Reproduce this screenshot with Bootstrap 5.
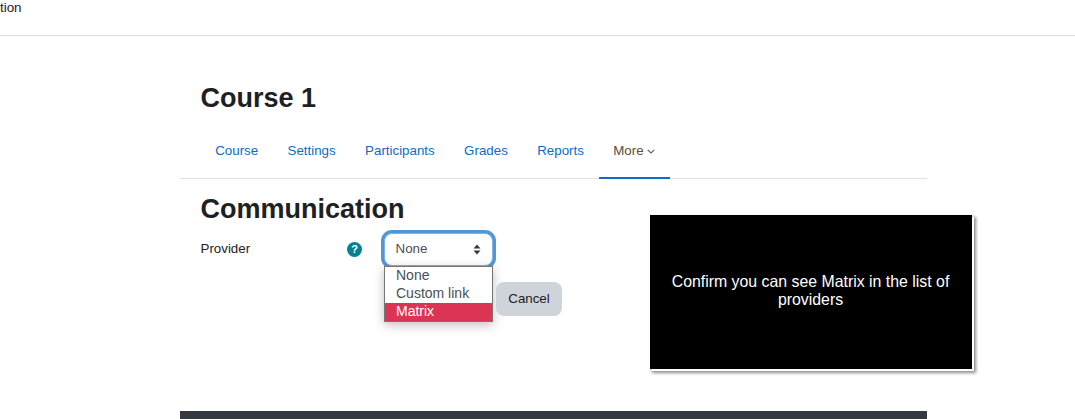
<!DOCTYPE html>
<html lang="en"><head><meta charset="utf-8"><title>Course 1</title>
<link href="https://cdn.jsdelivr.net/npm/bootstrap@5.3.0/dist/css/bootstrap.min.css" rel="stylesheet">
<style>
html,body{height:419px;overflow:hidden}
body{font-family:"Liberation Sans",Arial,sans-serif;font-size:13.33px;color:#1d2125;background:#fff;position:relative}
.top-strip{height:36px;border-bottom:1px solid #dee2e6;line-height:15px}
.page-wrap{width:747px;margin-left:180px}
.course-head{padding:45px 21px 0;height:107px}
.course-head h2,.comm-title{font-size:27px;font-weight:700;line-height:34px;margin:0;color:#1d2125}
.course-head h2{margin-left:-.5px}
.course-tabs{height:37px;border-bottom:1px solid #dee2e6;padding-left:20.5px;flex-wrap:nowrap}
.course-tabs .nav-link{padding:1px 14.7px 0;height:37px;line-height:16px;font-size:13.33px;color:#0f6cbf;border-bottom:2px solid transparent;margin-bottom:-1px}
.course-tabs .nav-link.act{color:#5e4b3f;border-bottom-color:#0f6cbf}
.tabs-row{margin-top:-1px}
.comm-title{padding:0 20.5px;margin-top:13px}
.form-line{padding-left:20.5px;margin-top:5px;height:36px}
.prov-label{width:146.5px;line-height:16px}
.help-dot{width:15px;height:15px;border-radius:50%;background:#008196;color:#fff;font-size:11px;font-weight:700;line-height:15px;text-align:center;margin-right:22px}
.select-fake{width:109px;height:33px;border:1px solid #7fb2e3;border-radius:8px;box-shadow:0 0 0 3px #4e97d8;padding:0 11.5px 0 10.5px;background:#fff;color:#495057;line-height:16px}
.list-pop{position:absolute;left:384px;top:266px;width:109px;height:56px;background:#fff;border:1px solid #767676;box-shadow:0 3px 10px rgba(0,0,0,.25);font-size:14px;line-height:16px;color:#495057}
.list-pop div{padding:0 11px;height:18px}
.list-pop .on{background:#dc3553;color:#fff}
.btn-cancel{position:absolute;left:496px;top:282px;width:66px;height:34px;background:#ced4da;border:0;border-radius:8px;color:#1d2125;font-size:13.33px;padding:0}
.tour-box{position:absolute;left:650px;top:215px;width:322px;height:154px;background:#000;color:#fff;font-size:15.87px;line-height:18px;text-align:center;padding:0 15px 2px 14px;box-shadow:2px 2px 0 #fff,3px 3px 3px 1px rgba(0,0,0,.45)}
.foot-band{position:absolute;left:180px;top:411px;width:747px;height:8px;background:#343a40}
</style></head>
<body>
<div class="top-strip">tion</div>
<div class="page-wrap">
  <div class="course-head"><h2>Course 1</h2></div>
  <ul class="nav course-tabs tabs-row">
    <li class="nav-item"><a class="nav-link" href="#">Course</a></li>
    <li class="nav-item"><a class="nav-link" href="#">Settings</a></li>
    <li class="nav-item"><a class="nav-link" href="#">Participants</a></li>
    <li class="nav-item"><a class="nav-link" href="#">Grades</a></li>
    <li class="nav-item"><a class="nav-link" href="#">Reports</a></li>
    <li class="nav-item"><a class="nav-link act" href="#">More <svg width="8" height="5" viewBox="0 0 8 5" fill="none" stroke="#5e5e5e" stroke-width="1.1"><path d="M.7.8 4 4 7.3.8"/></svg></a></li>
  </ul>
  <h2 class="comm-title">Communication</h2>
  <div class="d-flex align-items-center form-line">
    <div class="prov-label">Provider</div>
    <div class="help-dot">?</div>
    <div class="select-fake d-flex align-items-center justify-content-between">
      <span>None</span>
      <svg width="8" height="11" viewBox="0 0 8 11" fill="#343a40"><path d="M4 .5 7.5 4.5H.5zM4 10.5.5 6.5h7z"/></svg>
    </div>
  </div>
</div>
<div class="list-pop"><div>None</div><div>Custom link</div><div class="on">Matrix</div></div>
<button class="btn-cancel" type="button">Cancel</button>
<div class="tour-box d-flex align-items-center justify-content-center"><span>Confirm you can see Matrix in the list of providers</span></div>
<div class="foot-band"></div>
<script src="https://cdn.jsdelivr.net/npm/bootstrap@5.3.0/dist/js/bootstrap.bundle.min.js"></script>
</body></html>
